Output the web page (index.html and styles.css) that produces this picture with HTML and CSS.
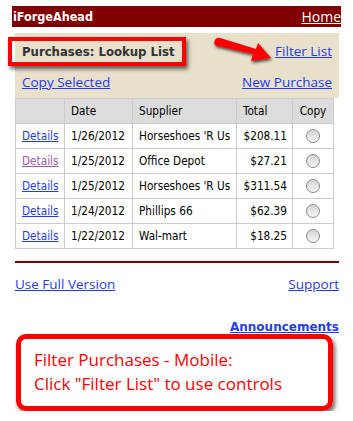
FILE: index.html
```html
<!DOCTYPE html>
<html lang="en">
<head>
    <meta charset="UTF-8">
    <meta name="viewport" content="width=device-width, initial-scale=1.0">
    <title>iForgeAhead - Purchases</title>
    <link rel="stylesheet" href="styles.css">
</head>
<body>
    <div class="header">
        <span class="brand">iForgeAhead</span>
        <a href="#" class="home">Home</a>
    </div>
    <div class="panel">
        <div class="panel-top">
            <span class="title">Purchases: Lookup List</span>
            <a href="#">Filter List</a>
        </div>
        <div class="panel-links">
            <a href="#">Copy Selected</a>
            <a href="#">New Purchase</a>
        </div>
        <svg class="arrow" width="70" height="36" viewBox="0 0 70 36">
            <defs>
                <filter id="shadow" x="-20%" y="-40%" width="150%" height="200%">
                    <feDropShadow dx="1" dy="2" stdDeviation="1.6" flood-color="#000" flood-opacity="0.7"/>
                </filter>
            </defs>
            <path d="M6 6 C4 9 6 12 9 12 L44 20 L42 27 L62 24 L49 9 L47 15 L11 4 C9 3.5 7 4.5 6 6 Z" fill="#f00" filter="url(#shadow)"/>
        </svg>
    </div>
    <table class="list">
        <colgroup>
            <col class="c-link">
            <col class="c-date">
            <col class="c-supplier">
            <col class="c-total">
            <col class="c-copy">
        </colgroup>
        <thead>
            <tr>
                <th></th>
                <th>Date</th>
                <th>Supplier</th>
                <th>Total</th>
                <th class="copy">Copy</th>
            </tr>
        </thead>
        <tbody>
            <tr>
                <td><a href="#">Details</a></td>
                <td>1/26/2012</td>
                <td>Horseshoes 'R Us</td>
                <td class="num">$208.11</td>
                <td class="copy"><span class="radio"></span></td>
            </tr>
            <tr>
                <td><a href="#" class="visited">Details</a></td>
                <td>1/25/2012</td>
                <td>Office Depot</td>
                <td class="num">$27.21</td>
                <td class="copy"><span class="radio"></span></td>
            </tr>
            <tr>
                <td><a href="#">Details</a></td>
                <td>1/25/2012</td>
                <td>Horseshoes 'R Us</td>
                <td class="num">$311.54</td>
                <td class="copy"><span class="radio"></span></td>
            </tr>
            <tr>
                <td><a href="#">Details</a></td>
                <td>1/24/2012</td>
                <td>Phillips 66</td>
                <td class="num">$62.39</td>
                <td class="copy"><span class="radio"></span></td>
            </tr>
            <tr>
                <td><a href="#">Details</a></td>
                <td>1/22/2012</td>
                <td>Wal-mart</td>
                <td class="num">$18.25</td>
                <td class="copy"><span class="radio"></span></td>
            </tr>
        </tbody>
    </table>
    <div class="footer">
        <div class="footer-links">
            <a href="#">Use Full Version</a>
            <a href="#">Support</a>
        </div>
        <div class="news">
            <a href="#">Announcements</a>
        </div>
    </div>
    <div class="callout">
        Filter Purchases - Mobile:<br>
        Click "Filter List" to use controls
    </div>
</body>
</html>
```

FILE: styles.css
```css
body {
    margin: 0;
    background-color: white;
    font-family: "DejaVu Sans Condensed", "DejaVu Sans", sans-serif;
    font-size: 12px;
    color: #000;
}
a {
    color: #1f3cf0;
}
a.visited {
    color: #a05aa8;
}
.header {
    display: flex;
    justify-content: space-between;
    align-items: center;
    height: 21px;
    margin: 6px 12px 0 12px;
    padding: 0 0 0 1px;
    background-color: #800000;
}
.brand {
    color: white;
    font-family: "DejaVu Sans Condensed", "DejaVu Sans", sans-serif;
    font-weight: bold;
    font-size: 12.5px;
}
a.home {
    color: white;
    font-family: "Open Sans", sans-serif;
    font-size: 14px;
}
.panel {
    position: relative;
    margin: 6px 14px 0 15px;
    padding: 0 7px 4px 7px;
    background-color: #e8e0cb;
    font-family: "Open Sans", sans-serif;
    font-size: 13.5px;
}
.panel-top {
    display: flex;
    justify-content: space-between;
    align-items: center;
    height: 36px;
}
.title {
    margin-left: -14px;
    margin-top: 0;
    padding: 3px 7px 3px 10px;
    border: 4px solid #f00;
    box-shadow: 2px 3px 4px rgba(0, 0, 0, 0.6);
    color: #333;
    font-family: "DejaVu Sans Condensed", "DejaVu Sans", sans-serif;
    font-weight: bold;
    font-size: 13px;
}
.panel-links {
    display: flex;
    justify-content: space-between;
    align-items: center;
    height: 25px;
}
.arrow {
    position: absolute;
    left: 194px;
    top: 1px;
}
table.list {
    margin: 0 0 0 15px;
    width: 318px;
    table-layout: fixed;
    border-collapse: collapse;
    border: 1px solid #999;
    font-size: 11.7px;
}
col.c-link { width: 49px; }
col.c-date { width: 68px; }
col.c-supplier { width: 104px; }
col.c-total { width: 56px; }
col.c-copy { width: 41px; }
.list th, .list td {
    height: 24px;
    padding: 0 4px 0 6px;
    border: 1px solid #ccc;
    text-align: left;
    white-space: nowrap;
    overflow: hidden;
}
.list th {
    background-color: #dcdcdc;
    font-weight: normal;
}
.list td.num {
    text-align: right;
    padding-right: 5px;
}
.list .copy {
    text-align: center;
    padding: 0;
}
.radio {
    display: inline-block;
    width: 12px;
    height: 12px;
    border: 1px solid #8a8a8a;
    border-radius: 50%;
    background: linear-gradient(#d4d4d4, #f6f6f6);
    vertical-align: middle;
}
.footer {
    margin: 12px 14px 0 15px;
    padding-top: 12px;
    border-top: 2px solid #800000;
    font-family: "Open Sans", sans-serif;
    font-size: 13.5px;
}
.footer-links {
    display: flex;
    justify-content: space-between;
}
.news {
    margin-top: 24px;
    text-align: right;
}
.news a {
    font-family: "DejaVu Sans", sans-serif;
    font-weight: bold;
    font-size: 12px;
}
.callout {
    margin: -1px 20px 0 16px;
    padding: 9px 12px 10px 13px;
    border: 5px solid #f00;
    border-radius: 10px;
    box-shadow: 2px 3px 4px rgba(0, 0, 0, 0.6);
    color: #f00;
    font-family: "Open Sans", sans-serif;
    font-size: 17px;
    line-height: 24px;
}
```
